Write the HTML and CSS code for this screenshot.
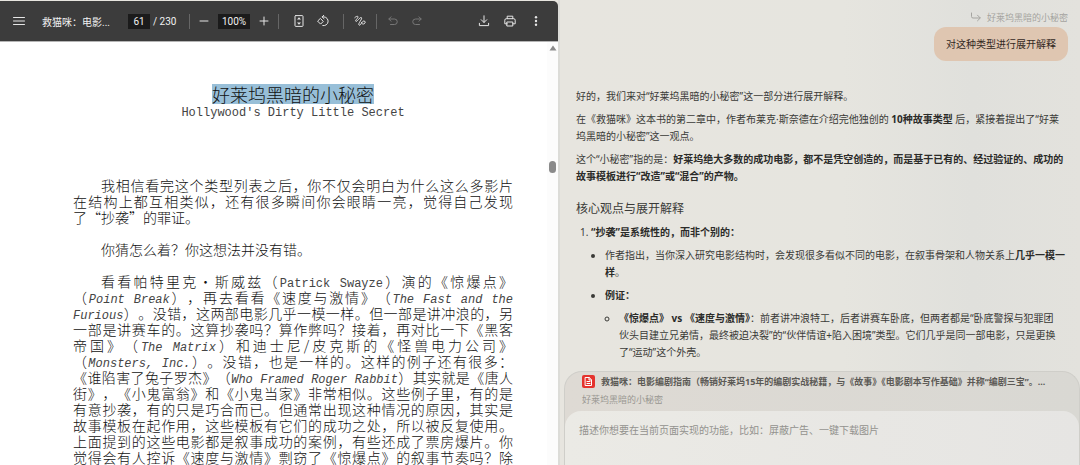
FILE: index.html
```html
<!DOCTYPE html>
<html lang="zh-CN">
<head>
    <meta charset="UTF-8">
    <meta name="viewport" content="width=device-width, initial-scale=1.0">
    <title>救猫咪：电影编剧指南</title>
    <link rel="stylesheet" href="styles.css">
</head>
<body>

    <main class="viewer">
        <header class="toolbar">
            <button type="button" class="icon-btn" aria-label="菜单">
                <svg width="12" height="12" viewBox="0 0 12 12"><path d="M0.5 2.5h11M0.5 6h11M0.5 9.5h11"/></svg>
            </button>
            <span class="file-name">救猫咪：电影...</span>
            <div class="pages">
                <input type="text" class="dark-input page-input" value="61" aria-label="页码">
                <span>/ 230</span>
            </div>
            <span class="sep"></span>
            <button type="button" class="icon-btn" aria-label="缩小">
                <svg width="12" height="12" viewBox="0 0 12 12"><path d="M2 6h8"/></svg>
            </button>
            <input type="text" class="dark-input zoom-input" value="100%" aria-label="缩放">
            <button type="button" class="icon-btn" aria-label="放大">
                <svg width="12" height="12" viewBox="0 0 12 12"><path d="M2 6h8M6 2v8"/></svg>
            </button>
            <span class="sep"></span>
            <div class="tools fit-tools">
                <button type="button" class="icon-btn" aria-label="适合页面">
                    <svg width="12" height="12" viewBox="0 0 12 12"><rect x="2" y="0.6" width="8" height="10.8" rx="0.8"/><path class="solid" d="M6 2.2l2 2.3H4zM6 9.8l2-2.3H4z"/></svg>
                </button>
                <button type="button" class="icon-btn" aria-label="旋转">
                    <svg width="12" height="12" viewBox="0 0 12 12"><path d="M3.6 3.7L6.3 6.4 3.6 9.1.9 6.4z"/><path d="M5.2 1.9H7a4.400 4.400 0 1 1-1.200 8.700M7 0.1L5.1 1.9 7 3.7"/></svg>
                </button>
            </div>
            <span class="sep"></span>
            <div class="tools draw-tools">
                <button type="button" class="icon-btn" aria-label="绘图">
                    <svg width="12" height="12" viewBox="0 0 12 12"><path d="M0.8 2.6C2.200 1.200 4.200.6 4 2.200 3.800 3.600 1 5 1.800 6.200 2.800 7.600 6 1.600 7.400 2.600 8.800 3.800 3.600 8.600 5 10 6.600 11.400 7.600 6.200 9.800 6 11.600 6 11.600 8 10.200 8.800 9 9.400 7.400 8.800 7.400 7.600"/></svg>
                </button>
            </div>
            <span class="sep"></span>
            <div class="tools history-tools">
                <button type="button" class="icon-btn" aria-label="撤销" disabled>
                    <svg width="12" height="12" viewBox="0 0 12 12"><path d="M4 1.800L1.800 4 4 6.200M2 4h5.500a2.700 2.700 0 0 1 0 5.500H3.500"/></svg>
                </button>
                <button type="button" class="icon-btn" aria-label="重做" disabled>
                    <svg width="12" height="12" viewBox="0 0 12 12"><path d="M8 1.800L10.200 4 8 6.200M10 4H4.500a2.700 2.700 0 0 0 0 5.500h4"/></svg>
                </button>
            </div>
            <div class="tools file-tools">
                <button type="button" class="icon-btn" aria-label="下载">
                    <svg width="12" height="12" viewBox="0 0 12 12"><path d="M6 0.800v6.500M3.200 4.700L6 7.500l2.800-2.800M1.400 8.300v2.300h9.200V8.300"/></svg>
                </button>
                <button type="button" class="icon-btn" aria-label="打印">
                    <svg width="12" height="12" viewBox="0 0 12 12"><path d="M3.200 3.700V1.200h5.600v2.500M3.200 8.800H.8V5.200a1.500 1.500 0 0 1 1.500-1.500h7.400a1.500 1.500 0 0 1 1.500 1.500v3.600H8.800M3.200 7h5.600v4H3.200z"/></svg>
                </button>
                <button type="button" class="icon-btn" aria-label="更多">
                    <svg width="12" height="12" viewBox="0 0 12 12"><g class="solid"><circle cx="6" cy="2.200" r="1.200"/><circle cx="6" cy="6" r="1.200"/><circle cx="6" cy="9.800" r="1.200"/></g></svg>
                </button>
            </div>
        </header>

        <div class="document">
            <article class="sheet">
                <h1><mark>好莱坞黑暗的小秘密</mark></h1>
                <p class="subtitle" lang="en">Hollywood's Dirty Little Secret</p>

                <p class="para">
                    <span class="line indent">我相信看完这个类型列表之后，你不仅会明白为什么这么多影片</span>
                    <span class="line">在结构上都互相类似，还有很多瞬间你会眼睛一亮，觉得自己发现</span>
                    <span class="line last">了“抄袭”的罪证。</span>
                </p>
                <p class="para">
                    <span class="line indent last">你猜怎么着？你这想法并没有错。</span>
                </p>
                <p class="para">
                    <span class="line indent">看看帕特里克·斯威兹（<span class="latin">Patrick Swayze</span>）演的《惊爆点》</span>
                    <span class="line">（<i class="latin">Point Break</i>），再去看看《速度与激情》（<i class="latin">The Fast and the</i></span>
                    <span class="line"><i class="latin">Furious</i>）。没错，这两部电影几乎一模一样。但一部是讲冲浪的，另</span>
                    <span class="line">一部是讲赛车的。这算抄袭吗？算作弊吗？接着，再对比一下《黑客</span>
                    <span class="line">帝国》（<i class="latin">The Matrix</i>）和迪士尼/皮克斯的《怪兽电力公司》</span>
                    <span class="line">（<i class="latin">Monsters, Inc.</i>）。没错，也是一样的。这样的例子还有很多：</span>
                    <span class="line">《谁陷害了兔子罗杰》（<i class="latin">Who Framed Roger Rabbit</i>）其实就是《唐人</span>
                    <span class="line">街》，《小鬼富翁》和《小鬼当家》非常相似。这些例子里，有的是</span>
                    <span class="line">有意抄袭，有的只是巧合而已。但通常出现这种情况的原因，其实是</span>
                    <span class="line">故事模板在起作用，这些模板有它们的成功之处，所以被反复使用。</span>
                    <span class="line">上面提到的这些电影都是叙事成功的案例，有些还成了票房爆片。你</span>
                    <span class="line">觉得会有人控诉《速度与激情》剽窃了《惊爆点》的叙事节奏吗？除</span>
                </p>
            </article>
            <div class="scrollbar">
                <svg width="8" height="6" viewBox="0 0 8 6"><path class="arrow" d="M4 0.500L7.500 5.500H.5z"/></svg>
                <span class="thumb"></span>
            </div>
        </div>
    </main>

    <aside class="assistant">
        <section class="chat">
            <div class="quote">
                <svg width="12" height="10" viewBox="0 0 12 10"><path d="M1.500 1v3.500a1.500 1.500 0 0 0 1.500 1.500h7M7.500 3.200L10.300 6 7.500 8.800"/></svg>
                <span>好莱坞黑暗的小秘密</span>
            </div>
            <div class="bubble">对这种类型进行展开解释</div>

            <div class="answer">
                <p>好的，我们来对“好莱坞黑暗的小秘密”这一部分进行展开解释。</p>
                <p>在《救猫咪》这本书的第二章中，作者布莱克·斯奈德在介绍完他独创的 <strong>10种故事类型</strong> 后，紧接着提出了“好莱<br>坞黑暗的小秘密”这一观点。</p>
                <p>这个“小秘密”指的是：<strong>好莱坞绝大多数的成功电影，都不是凭空创造的，而是基于已有的、经过验证的、成功的<br>故事模板进行“改造”或“混合”的产物。</strong></p>
                <h2>核心观点与展开解释</h2>
                <ol>
                    <li>
                        <strong>“抄袭”是系统性的，而非个别的：</strong>
                        <ul>
                            <li>作者指出，当你深入研究电影结构时，会发现很多看似不同的电影，在叙事骨架和人物关系上<strong>几乎一模一<br>样</strong>。</li>
                            <li>
                                <strong>例证：</strong>
                                <ul>
                                    <li><strong>《惊爆点》 vs 《速度与激情》</strong>：前者讲冲浪特工，后者讲赛车卧底，但两者都是“卧底警探与犯罪团<br>伙头目建立兄弟情，最终被迫决裂”的“伙伴情谊+陷入困境”类型。它们几乎是同一部电影，只是更换<br>了“运动”这个外壳。</li>
                                </ul>
                            </li>
                        </ul>
                    </li>
                </ol>
            </div>
        </section>

        <form class="composer">
            <div class="context">
                <div class="context-title">
                    <svg width="13" height="13" viewBox="0 0 13 13"><rect class="pdf-bg" width="13" height="13" rx="2"/><path class="pdf-page" d="M3.500 2.500h3.700l2.300 2.300v5.700h-6zM7 2.500v2.500h2.500M5 6.500h3M5 8.500h3"/></svg>
                    <span>救猫咪：电影编剧指南（畅销好莱坞15年的编剧实战秘籍，与《故事》《电影剧本写作基础》并称“编剧三宝”。...</span>
                </div>
                <p>好莱坞黑暗的小秘密</p>
            </div>
            <textarea aria-label="描述" placeholder="描述你想要在当前页面实现的功能，比如：屏蔽广告、一键下载图片"></textarea>
        </form>
    </aside>

</body>
</html>
```

FILE: styles.css
```css
* {
    margin: 0;
    padding: 0;
    box-sizing: border-box;
}

body {
    display: grid;
    grid-template-columns: minmax(0, 31fr) minmax(0, 29fr);
    grid-template-rows: minmax(0, 1fr);
    height: 100vh;
    overflow: hidden;
    background: linear-gradient(to right, #e7e5df 52%, #e6e5df 78%, #e0e0dc 90%, #e3e2dd);
    font-family: "Noto Sans", "Noto Sans CJK SC", sans-serif;
    font-size: 10px;
    color: #3a3a37;
}

svg {
    display: block;
    flex: none;
    fill: none;
    stroke: currentColor;
    stroke-linecap: round;
    stroke-linejoin: round;
}

/* PDF viewer */
.viewer {
    display: flex;
    flex-direction: column;
    padding-top: 1px;
}

.toolbar {
    display: flex;
    align-items: center;
    gap: 3px;
    height: 41px;
    padding: 0 11px 0 8px;
    background: #3c3c3c;
    border-bottom: 1px solid #b5b5b5;
    border-top-right-radius: 5px;
    color: #f1f1f1;
    font-family: Roboto, "Noto Sans CJK SC", sans-serif;
}

.icon-btn {
    display: flex;
    align-items: center;
    justify-content: center;
    flex: none;
    width: 22px;
    height: 22px;
    border: none;
    background: none;
    color: #e6e6e6;
    cursor: pointer;
}

.icon-btn:disabled {
    color: #777;
    cursor: default;
}

.solid {
    fill: currentColor;
    stroke: none;
}

.file-name {
    width: 80px;
    margin-left: 9px;
    white-space: nowrap;
}

.pages {
    display: flex;
    align-items: center;
    gap: 3px;
    width: 58px;
    margin-left: 3px;
}

.dark-input {
    height: 15px;
    border: none;
    background: #1b1b1b;
    color: #f1f1f1;
    font-family: inherit;
    font-size: 10px;
    text-align: center;
}

.page-input {
    width: 22px;
}

.zoom-input {
    width: 32px;
}

.sep {
    width: 1px;
    height: 15px;
    background: #666;
}

.tools {
    display: flex;
    gap: 2px;
}

.fit-tools {
    margin: 0 6px;
}

.draw-tools {
    margin: 0 2px;
}

.history-tools {
    margin-left: 2px;
}

.file-tools {
    gap: 4px;
    margin-left: auto;
}

.document {
    flex: 1;
    min-height: 0;
    display: flex;
    background: #fff;
    overflow: hidden;
}

.sheet {
    flex: 1;
    min-width: 0;
    padding: 42px 34px 0 73px;
    font-family: "Noto Sans CJK SC", sans-serif;
    font-size: 14px;
    font-weight: 300;
    line-height: 16px;
    color: #111;
    text-spacing-trim: space-all;
}

.sheet h1 {
    margin-bottom: 1px;
    font-size: 18px;
    font-weight: 300;
    line-height: 20px;
    text-align: center;
}

.sheet mark {
    display: inline-block;
    height: 20px;
    background: #98bfd8;
    color: #111;
}

.subtitle {
    margin-bottom: 56px;
    font-family: "Liberation Mono", monospace;
    font-size: 12px;
    text-align: center;
    color: #444;
}

.para {
    margin-bottom: 16px;
}

.line {
    display: block;
    height: 16px;
    white-space: nowrap;
    text-align: justify;
    text-align-last: justify;
}

.line.last {
    text-align-last: left;
}

.indent {
    padding-left: 28px;
}

.latin {
    font-family: "Liberation Mono", monospace;
    font-size: 12px;
    color: #444;
}

.scrollbar {
    display: flex;
    flex-direction: column;
    align-items: center;
    width: 11px;
    padding-top: 3px;
    background: #fcfcfc;
}

.arrow {
    fill: #8a8a8a;
    stroke: none;
}

.thumb {
    width: 7px;
    height: 12px;
    margin-top: 110px;
    border-radius: 4px;
    background: #8a8a8a;
}

/* Assistant panel */
.assistant {
    display: flex;
    flex-direction: column;
    border-left: 2px solid #dcdcd8;
}

.chat {
    flex: 1;
    min-height: 0;
    display: flex;
    flex-direction: column;
    padding: 9px 12px 0 16px;
    overflow: hidden;
}

.quote {
    display: flex;
    align-items: center;
    align-self: flex-end;
    gap: 5px;
    height: 16px;
    margin-bottom: 2px;
    font-size: 9px;
    color: #a5a4a0;
}

.bubble {
    align-self: flex-end;
    padding: 8px 12px;
    margin-bottom: 27px;
    border-radius: 12px;
    background: #dfc6b1;
    line-height: 18px;
    color: #33281f;
}

.answer {
    line-height: 17px;
    white-space: nowrap;
}

.answer p {
    margin-bottom: 6px;
}

.answer strong {
    font-weight: 700;
    color: #2b2b29;
}

.answer h2 {
    margin: 15px 0 7px;
    font-size: 12px;
    font-weight: 400;
    line-height: 17px;
}

.answer ol {
    padding-left: 15px;
}

.answer ul {
    padding-left: 14px;
    list-style: disc;
}

.answer ul ul {
    list-style: circle;
}

.answer ul li {
    margin-top: 6px;
}

.composer {
    display: flex;
    flex-direction: column;
    height: 94px;
    margin-left: 4px;
    border: 1px solid #cfcec9;
    border-bottom: none;
    border-radius: 18px 18px 0 0;
    background: linear-gradient(to right, #dedad4, #d9d8d3);
    overflow: hidden;
}

.context {
    height: 39px;
    padding: 2px 14px 0 17px;
    font-size: 9px;
    color: #999792;
}

.context-title {
    display: flex;
    align-items: center;
    gap: 6px;
    height: 14px;
    margin-bottom: 5px;
    font-weight: 700;
    white-space: nowrap;
    color: #5c5a56;
}

.context p {
    line-height: 14px;
}

.pdf-bg {
    fill: #e5322d;
    stroke: none;
}

.pdf-page {
    stroke: #fff;
}

.composer textarea {
    flex: 1;
    width: 100%;
    padding: 11px 14px;
    border: none;
    border-radius: 16px 16px 0 0;
    outline: none;
    resize: none;
    background: linear-gradient(to right, #ebeae5, #e6e5e3);
    font-family: inherit;
    font-size: 10px;
    line-height: 17px;
}

.composer textarea::placeholder {
    color: #93928e;
}
```
